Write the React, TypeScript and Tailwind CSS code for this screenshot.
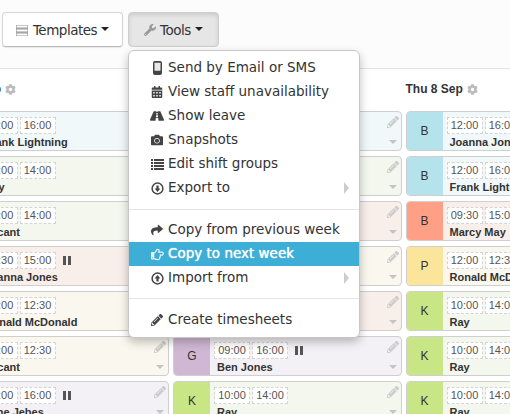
import React from "react";
import { FaCalendarAlt, FaRoad, FaCamera, FaShare, FaRegHandPointRight, FaPencilAlt, FaWrench, FaCog } from "react-icons/fa";

type Shift = { letter: string; block: string; tint: string; start: string; end: string; name: string; pause?: boolean };

const B = "bg-[#b5e3ec]", O = "bg-[#ff9f85]", P = "bg-[#fae59a]", K = "bg-[#c8e685]", G = "bg-[#d0b8d4]";
const blue = "bg-[#f1f8fa]", green = "bg-[#f4f7ee]", pink = "bg-[#f8eeea]", cream = "bg-[#faf7ef]", lav = "bg-[#f3f1f5]";

const col1: Shift[] = [
  { letter: "B", block: B, tint: blue, start: "12:00", end: "16:00", name: "Frank Lightning" },
  { letter: "K", block: K, tint: green, start: "10:00", end: "14:00", name: "Ray" },
  { letter: "K", block: K, tint: green, start: "10:00", end: "14:00", name: "Vacant" },
  { letter: "B", block: O, tint: pink, start: "09:30", end: "15:00", name: "Joanna Jones", pause: true },
  { letter: "P", block: P, tint: cream, start: "12:00", end: "12:30", name: "Ronald McDonald" },
  { letter: "P", block: P, tint: cream, start: "12:00", end: "12:30", name: "Vacant" },
  { letter: "G", block: G, tint: lav, start: "12:00", end: "16:00", name: "Jane Jebes", pause: true },
];
const col2: Shift[] = [
  { letter: "B", block: B, tint: blue, start: "12:00", end: "16:00", name: "Joanna Jones" },
  { letter: "K", block: K, tint: green, start: "10:00", end: "14:00", name: "Ray" },
  { letter: "B", block: O, tint: pink, start: "09:30", end: "15:00", name: "Marcy May" },
  { letter: "P", block: P, tint: cream, start: "12:00", end: "12:30", name: "Ronald McDonald" },
  { letter: "B", block: O, tint: pink, start: "09:30", end: "15:00", name: "Marcy May" },
  { letter: "G", block: G, tint: lav, start: "09:00", end: "16:00", name: "Ben Jones", pause: true },
  { letter: "K", block: K, tint: green, start: "10:00", end: "14:00", name: "Ray" },
];
const col3: Shift[] = [
  { letter: "B", block: B, tint: blue, start: "12:00", end: "16:00", name: "Joanna Jones" },
  { letter: "B", block: B, tint: blue, start: "12:00", end: "16:00", name: "Frank Lightning" },
  { letter: "B", block: O, tint: pink, start: "09:30", end: "15:00", name: "Marcy May" },
  { letter: "P", block: P, tint: cream, start: "12:00", end: "12:30", name: "Ronald McDonald" },
  { letter: "K", block: K, tint: green, start: "10:00", end: "14:00", name: "Ray" },
  { letter: "K", block: K, tint: green, start: "10:00", end: "14:00", name: "Ray" },
  { letter: "K", block: K, tint: green, start: "10:00", end: "14:00", name: "Ray" },
];

function Time({ t }: { t: string }) {
  return <span className="w-[36px] h-[17px] flex items-center justify-center border border-dashed border-[#d4d4d4] bg-white text-[11px] leading-none text-[#555]">{t}</span>;
}

function Card({ s }: { s: Shift }) {
  return (
    <div className={`relative flex h-[40px] shrink-0 rounded-[4px] border border-[#cfcfcf] overflow-hidden ${s.tint}`}>
      <div className={`w-[36px] shrink-0 flex items-center justify-center text-[12px] text-[#333] ${s.block}`}>{s.letter}</div>
      <div className="flex flex-col pl-[4px] pt-[5px] min-w-0">
        <div className="flex items-center gap-[2px]">
          <Time t={s.start} />
          <Time t={s.end} />
          {s.pause && (
            <span className="flex gap-[2px] ml-[5px]">
              <span className="w-[3px] h-[9px] bg-[#555]" />
              <span className="w-[3px] h-[9px] bg-[#555]" />
            </span>
          )}
        </div>
        <div className="pl-[3px] mt-[2px] text-[11px] leading-[13px] font-bold text-[#333] whitespace-nowrap">{s.name}</div>
      </div>
      <div className="absolute right-[1px] top-[4px] flex flex-col items-center w-[14px]">
        <FaPencilAlt className="text-[#cccccc]" size={12} />
        <span className="mt-[12px] w-0 h-0 border-x-[4px] border-x-transparent border-t-[4px] border-t-[#c4c4c4]" />
      </div>
    </div>
  );
}

function Column({ title, rows }: { title: string; rows: Shift[] }) {
  return (
    <div className="w-[228.5px] shrink-0">
      <div className="h-[42px] pb-[2px] flex items-center gap-[4px] text-[12px] font-bold text-[#333]">
        <span>{title}</span>
        <FaCog className="text-[#bbbbbb]" size={11} />
      </div>
      <div className="flex flex-col gap-[5px]">
        {rows.map((s, i) => <Card key={i} s={s} />)}
      </div>
    </div>
  );
}

function Circle({ up }: { up?: boolean }) {
  return (
    <svg width="13" height="13" viewBox="0 0 13 13" fill="none">
      <circle cx="6.5" cy="6.5" r="5.4" stroke="currentColor" strokeWidth="1.5" />
      <path d={up ? "M6.5 3 L9.4 6.4 H7.6 V9.6 H5.4 V6.4 H3.6 Z" : "M6.5 10 L9.4 6.6 H7.6 V3.4 H5.4 V6.6 H3.6 Z"} fill="currentColor" />
    </svg>
  );
}

function Phone() {
  return (
    <svg width="9" height="14" viewBox="0 0 9 14">
      <rect x="0" y="0" width="9" height="14" rx="2" fill="currentColor" />
      <rect x="1.5" y="1.8" width="6" height="8" rx="0.5" fill="#e8e8e8" />
    </svg>
  );
}

function ListIcon() {
  return (
    <svg width="13" height="11" viewBox="0 0 13 11" fill="currentColor">
      <path d="M0 0h2v2H0zM3 0h10v2H3zM0 3h2v2H0zM3 3h10v2H3zM0 6h2v2H0zM3 6h10v2H3zM0 9h2v2H0zM3 9h10v2H3z" />
    </svg>
  );
}

function Item({ icon, label, sub, active }: { icon: React.ReactNode; label: string; sub?: boolean; active?: boolean }) {
  return (
    <div className={`relative flex items-center h-[24px] pl-[21px] text-[13.5px] leading-none ${active ? "bg-[#3daed6] text-white [text-shadow:0_0_1px_#ffffff]" : "text-[#333]"}`}>
      <span className={`w-[14px] mr-[4px] flex justify-center ${active ? "text-[#e8f5fa]" : "text-[#444]"}`}>{icon}</span>
      <span>{label}</span>
      {sub && <span className="absolute right-[10px] top-[6px] w-0 h-0 border-y-[6px] border-y-transparent border-l-[5px] border-l-[#cccccc]" />}
    </div>
  );
}

function Caret() {
  return <span className="ml-[4px] mt-[-2px] w-0 h-0 border-x-[4px] border-x-transparent border-t-[4px] border-t-[#222]" />;
}

export default function App() {
  return (
    <div className="relative w-[510px] h-[414px] overflow-hidden bg-white" style={{ fontFamily: '"Liberation Sans", Arial, sans-serif' }}>
      <div className="h-[69px] bg-[#fcfcfc] border-b border-[#dde4e8] pl-[2px] pt-[12px] flex items-start gap-[5px] text-[13.5px] text-[#333]" style={{ fontFamily: '"DejaVu Sans", sans-serif' }}>
        <div className="w-[121px] h-[35px] pt-[1px] flex items-center justify-center rounded-[4px] border border-[#d5d5d5] border-b-[#bbbbbb] bg-white shadow-[0_1px_1px_rgba(0,0,0,0.08)]">
          <svg width="12" height="11" viewBox="0 0 12 11" className="mr-[5px] text-[#777]">
            <path d="M0 0h12v3H0zM0 4h12v3H0zM0 8h12v3H0z" fill="none" stroke="currentColor" strokeWidth="0.8" />
          </svg>
          <span className="tracking-[-0.5px]">Templates</span>
          <Caret />
        </div>
        <div className="w-[91px] h-[35px] pt-[1px] flex items-center justify-center rounded-[4px] border border-[#cfcfcf] bg-[#e6e6e6] shadow-[inset_0_2px_4px_rgba(0,0,0,0.12)]">
          <FaWrench className="mr-[4px] text-[#999]" size={12} />
          <span className="tracking-[-0.5px]">Tools</span>
          <Caret />
        </div>
      </div>

      <div className="flex gap-[4px] ml-[-59.5px]">
        <Column title="Wed 7 Sep" rows={col1} />
        <Column title="Wed 7 Sep" rows={col2} />
        <Column title="Thu 8 Sep" rows={col3} />
      </div>

      <div className="absolute left-[128px] top-[50px] w-[232px] h-[288px] rounded-[6px] border border-[#c8c8c8] bg-white pt-[5px] shadow-[0_4px_10px_rgba(0,0,0,0.25)] overflow-hidden" style={{ fontFamily: '"DejaVu Sans", sans-serif' }}>
        <Item icon={<Phone />} label="Send by Email or SMS" />
        <Item icon={<FaCalendarAlt size={12} />} label="View staff unavailability" />
        <Item icon={<FaRoad size={14} />} label="Show leave" />
        <Item icon={<FaCamera size={12} />} label="Snapshots" />
        <Item icon={<ListIcon />} label="Edit shift groups" />
        <Item icon={<Circle />} label="Export to" sub />
        <div className="mt-[9px] mb-[8px] h-px bg-[#e5e5e5]" />
        <Item icon={<FaShare size={12} />} label="Copy from previous week" />
        <Item icon={<FaRegHandPointRight size={13} />} label="Copy to next week" active />
        <Item icon={<Circle up />} label="Import from" sub />
        <div className="mt-[8px] mb-[9px] h-px bg-[#e5e5e5]" />
        <Item icon={<FaPencilAlt size={12} />} label="Create timesheets" />
      </div>
    </div>
  );
}
